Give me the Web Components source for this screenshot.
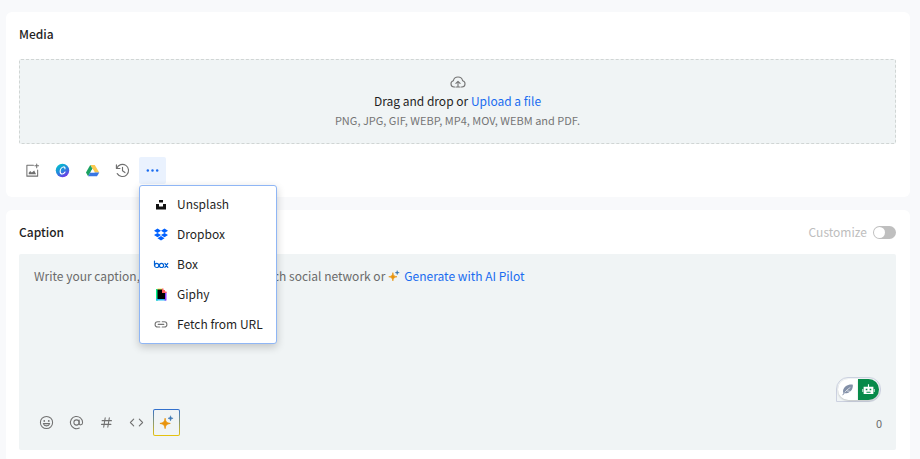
<!DOCTYPE html>
<html lang="en">
<head>
<meta charset="utf-8">
<meta name="viewport" content="width=device-width, initial-scale=1">
<title>Composer</title>
<style>
  :root {
    --composer-bg: #f8f9fb;
    --composer-field: #f0f4f5;
    --composer-link: #1a6cf0;
    --composer-text: #1f1f1f;
    --composer-muted: #757575;
  }

  body {
    margin: 0;
    padding: 12px 10px 0 6px;
    min-height: 100vh;
    box-sizing: border-box;
    background: var(--composer-bg);
    color: var(--composer-text);
    font: 12px/18px "Noto Sans CJK SC", "Noto Sans", sans-serif;
    display: flex;
    flex-direction: column;
    gap: 13px;
  }

  composer-card:last-child {
    flex: 1;
  }
</style>
</head>
<body>
<composer-card heading="Media">
  <media-dropzone></media-dropzone>
  <icon-toolbar>
    <icon-button icon="image" label="Media library"></icon-button>
    <icon-button icon="canva" label="Canva"></icon-button>
    <icon-button icon="drive" label="Google Drive"></icon-button>
    <icon-button icon="history" label="Recent files"></icon-button>
    <source-menu>
      <menu-item icon="unsplash">Unsplash</menu-item>
      <menu-item icon="dropbox">Dropbox</menu-item>
      <menu-item icon="box">Box</menu-item>
      <menu-item icon="giphy">Giphy</menu-item>
      <menu-item icon="link">Fetch from URL</menu-item>
    </source-menu>
  </icon-toolbar>
</composer-card>

<composer-card heading="Caption">
  <toggle-switch slot="action">Customize</toggle-switch>
  <caption-editor>
    <icon-button icon="smile" label="Emoji"></icon-button>
    <icon-button icon="at" label="Mention"></icon-button>
    <icon-button icon="hash" label="Hashtag"></icon-button>
    <icon-button icon="code" label="Variables"></icon-button>
    <icon-button icon="sparkle" label="AI Pilot" outlined></icon-button>
  </caption-editor>
</composer-card>

<script>
// =============================================================================
// Icons
// =============================================================================

const stroke = 'fill="none" stroke="currentColor" stroke-linecap="round" stroke-linejoin="round"';

const icons = {
  cloud: `<svg viewBox="0 0 16 16" ${stroke} stroke-width="1.1">
    <path d="M5 13H4a3.2 3.2 0 0 1-.6-6.3 4.7 4.7 0 0 1 9.2 0A3.2 3.2 0 0 1 12 13h-1M8 13V7.5M5.9 9.4 8 7.3l2.1 2.1M6.3 13h3.4"/></svg>`,
  image: `<svg viewBox="0 0 16 16" ${stroke} stroke-width="1.1">
    <path d="M9 2.500H2v11.500h11.500V7.500"/><path d="M12.500 1v4M10.500 3h4"/>
    <path d="M4 12v-1.500l1.500-2 1.800 1.700L9.800 8l2 4z" fill="currentColor" stroke="none"/></svg>`,
  canva: `<svg viewBox="0 0 16 16">
    <defs><linearGradient id="g" x1=".2" y1="0" x2=".8" y2="1">
      <stop offset="0" stop-color="#00c4cc"/><stop offset=".5" stop-color="#2586dd"/><stop offset="1" stop-color="#7d2ae8"/></linearGradient></defs>
    <circle cx="8" cy="8" r="7.200" fill="url(#g)"/>
    <path d="M10.600 6.200c.3-1.400-.5-2.100-1.500-2-2 .2-3.600 2.600-3.600 4.800 0 1.700.9 2.700 2.200 2.700 1.300 0 2.300-.9 3-2.100" fill="none" stroke="#fff" stroke-width="1.200" stroke-linecap="round"/></svg>`,
  drive: `<svg viewBox="0 0 16 16">
    <path d="M5.600 2h4.800l4.800 8h-4.700z" fill="#fbc94f"/>
    <path d="M5.600 2 8 6.100 3.300 14 1 10z" fill="#1ba261"/>
    <path d="M5.600 10H15.200l-2.400 4H3.300z" fill="#3a77e3"/>
    <path d="M8 6.100 10.300 10H5.700z" fill="#fff"/></svg>`,
  history: `<svg viewBox="0 0 16 16" ${stroke} stroke-width="1.200">
    <path d="M1.500 2v3.800h3.800M1.900 5.600A6.500 6.500 0 1 1 2.400 11.300M8 4.500v3.800l2.600 1.900"/></svg>`,
  more: `<svg viewBox="0 0 16 16" fill="currentColor">
    <circle cx="3" cy="8" r="1.300"/><circle cx="8" cy="8" r="1.300"/><circle cx="13" cy="8" r="1.300"/></svg>`,
  unsplash: `<svg viewBox="0 0 16 16" fill="#111"><path d="M6 4h4v2.600H6zM3 8h3v2.600h4V8h3v5.500H3z"/></svg>`,
  dropbox: `<svg viewBox="0 0 16 16" fill="#0061ff">
    <path d="m4.500 2.500 3.500 2.200-3.500 2.200L1 4.700zM11.500 2.500 15 4.700l-3.500 2.200L8 4.700zM4.500 6.900 8 9.100l-3.500 2.200L1 9.100zM11.500 6.900 15 9.100l-3.500 2.200L8 9.100zM8 10l3.500 2.200L8 14.400l-3.500-2.200z"/></svg>`,
  box: `<svg viewBox="0 0 16 16" fill="none" stroke="#0061d5" stroke-width="1.200" stroke-linecap="round" stroke-linejoin="round">
    <path d="M1.500 5v4.400"/><circle cx="3.700" cy="9.400" r="2.100"/><circle cx="8.500" cy="9.400" r="2.100"/><path d="m11.900 7.400 2.900 4M14.800 7.400l-2.900 4"/></svg>`,
  giphy: `<svg viewBox="0 0 16 16">
    <path d="M3 3h2v11.500H3z" fill="#00f28a"/><path d="M4.500 2.500H9V4H4.500z" fill="#f5e663"/>
    <path d="M3 12.500h10v2H3z" fill="#23b8f5"/><path d="M11.500 6h2v8.500h-2z" fill="#8c3bff"/>
    <path d="M9 2.500h1.500V4H12v1.500h1.500V7H9z" fill="#ff6060"/><path d="M4.500 3.500H9V7h3v6H4.500z" fill="#000"/></svg>`,
  link: `<svg viewBox="0 0 16 16" ${stroke} stroke-width="1.100">
    <path d="M6.800 11H4.700a2.600 2.600 0 0 1 0-5.200h2.100M9.200 5.800h2.100a2.600 2.600 0 0 1 0 5.200H9.200M5.200 8.400h5.600"/></svg>`,
  smile: `<svg viewBox="0 0 16 16" ${stroke} stroke-width="1.100">
    <circle cx="8" cy="8" r="6.500"/><path d="M4.600 9.200c.5 1.500 1.800 2.400 3.400 2.400s2.900-.9 3.400-2.400z"/>
    <circle cx="5.600" cy="6.300" r=".4" fill="currentColor"/><circle cx="10.400" cy="6.300" r=".4" fill="currentColor"/></svg>`,
  at: `<svg viewBox="0 0 16 16" ${stroke} stroke-width="1.100">
    <circle cx="8" cy="8" r="2.800"/><path d="M10.800 5.300V9c0 2.300 3.700 2 3.700-1A6.500 6.500 0 1 0 11 13.800"/></svg>`,
  hash: `<svg viewBox="0 0 16 16" ${stroke} stroke-width="1.100"><path d="M6.600 3 5 13M11 3 9.400 13M3.300 6h10M2.700 10h10"/></svg>`,
  code: `<svg viewBox="0 0 16 16" ${stroke} stroke-width="1.200"><path d="M5 4.500 1.500 8 5 11.500M11 4.500 14.500 8 11 11.500"/></svg>`,
  sparkle: `<svg viewBox="0 0 16 16">
    <path d="M6.500 3.500C7.200 7.500 8 8.300 12 9c-4 .7-4.800 1.500-5.500 5.500C5.800 10.500 5 9.700 1 9c4-.7 4.800-1.500 5.500-5.500z" fill="#e8930c" stroke="#e8930c" stroke-width=".9"/>
    <path d="M12.300.8c.3 1.900.8 2.400 2.700 2.700-1.900.3-2.400.8-2.700 2.700-.3-1.900-.8-2.400-2.700-2.700 1.900-.3 2.400-.8 2.700-2.700z" fill="#3c78b4" stroke="#3c78b4" stroke-width=".6"/></svg>`,
  feather: `<svg viewBox="0 0 16 16"><path d="M3 12.500C1.600 9.500 3 6 5.800 4 8.200 2.300 11.500 1.500 14.500 2c.3 3-.4 5.500-2.200 7.600C10 12.200 6.500 13.300 3 12.500z" fill="#8390a8"/>
    <path d="M2 15C4.500 11 7.500 8 11.500 5.500M7 9.700l4 .5" fill="none" stroke="#fff" stroke-width=".8"/>
    <path d="M2 15l2.500-3.500" stroke="#8390a8" stroke-width="1.200"/></svg>`,
  robot: `<svg viewBox="0 0 16 16" fill="#fff"><path d="M7.300 1.500h1.400V4.500H14v9H2v-9h5.300z"/><path d="M.5 7.500h1v3.500h-1zM14.500 7.500h1v3.500h-1z"/>
    <path d="M4.600 7h2v2h-2zM9.400 7h2v2h-2zM5.500 10.800h5v1.100h-5z" fill="#078a49"/></svg>`,
};

const resetStyles = `
  *, *::before, *::after { box-sizing: border-box; }
  button, input, textarea { font: inherit; color: inherit; margin: 0; }
  svg { display: block; width: 16px; height: 16px; flex: none; }
`;

// =============================================================================
// ComposerCard - white panel with a heading and an optional action
// =============================================================================

class ComposerCard extends HTMLElement {
  constructor() {
    super();
    this.attachShadow({ mode: 'open' });
  }

  connectedCallback() {
    this.shadowRoot.innerHTML = `
      <style>
        ${resetStyles}
        :host {
          display: block;
          box-sizing: border-box;
          padding: 13px 14px 13px 13px;
          background: #fff;
          border-radius: 6px;
        }
        header {
          display: flex;
          align-items: center;
          justify-content: space-between;
          height: 18px;
          margin-bottom: 16px;
        }
        :host([heading="Caption"]) header { margin-bottom: 13px; }
        h2 { margin: 0; font-size: 12px; font-weight: 500; }
      </style>
      <header>
        <h2>${this.getAttribute('heading')}</h2>
        <slot name="action"></slot>
      </header>
      <slot></slot>
    `;
  }
}

// =============================================================================
// MediaDropzone
// =============================================================================

class MediaDropzone extends HTMLElement {
  constructor() {
    super();
    this.attachShadow({ mode: 'open' });
  }

  connectedCallback() {
    this.shadowRoot.innerHTML = `
      <style>
        ${resetStyles}
        :host {
          display: flex;
          flex-direction: column;
          align-items: center;
          box-sizing: border-box;
          padding: 14px 12px;
          border: 1px dashed #d0d5d4;
          border-radius: 2px;
          background: var(--composer-field);
        }
        svg { color: var(--composer-muted); }
        p { margin: 2px 0 1px; }
        a { color: var(--composer-link); text-decoration: none; }
        small { font-size: 11px; line-height: 18px; color: var(--composer-muted); }
      </style>
      ${icons.cloud}
      <p>Drag and drop or <a href="#upload">Upload a file</a></p>
      <small>PNG, JPG, GIF, WEBP, MP4, MOV, WEBM and PDF.</small>
    `;
  }
}

// =============================================================================
// IconToolbar / IconButton
// =============================================================================

class IconToolbar extends HTMLElement {
  constructor() {
    super();
    this.attachShadow({ mode: 'open' });
  }

  connectedCallback() {
    this.shadowRoot.innerHTML = `
      <style>
        :host { display: flex; gap: 3px; margin-top: 13px; }
      </style>
      <slot></slot>
    `;
  }
}

class IconButton extends HTMLElement {
  constructor() {
    super();
    this.attachShadow({ mode: 'open' });
  }

  connectedCallback() {
    this.shadowRoot.innerHTML = `
      <style>
        ${resetStyles}
        :host { display: block; }
        button {
          display: grid;
          place-items: center;
          width: 27px;
          height: 27px;
          padding: 0;
          border: 1px solid transparent;
          border-radius: 2px;
          background: none;
          color: #707070;
          cursor: pointer;
        }
        svg { width: 15px; height: 15px; }
        :host([active]) button { background: #eaf2fe; color: var(--composer-link); }
        :host([outlined]) button {
          background:
            linear-gradient(var(--composer-field), var(--composer-field)) padding-box,
            linear-gradient(#2f6fd0, #e8c30c) border-box;
        }
      </style>
      <button type="button" aria-label="${this.getAttribute('label')}">${icons[this.getAttribute('icon')]}</button>
    `;
  }
}

// =============================================================================
// SourceMenu / MenuItem - "more" button with its dropdown
// =============================================================================

class SourceMenu extends HTMLElement {
  constructor() {
    super();
    this.attachShadow({ mode: 'open' });
  }

  connectedCallback() {
    this.shadowRoot.innerHTML = `
      <style>
        ${resetStyles}
        :host { display: block; position: relative; }
        .menu {
          position: absolute;
          top: 28px;
          left: 0;
          z-index: 10;
          padding: 3px 0 4px;
          border: 1px solid #8fb6f5;
          border-radius: 3px;
          background: #fff;
          box-shadow: 0 3px 8px rgba(0, 0, 0, 0.2);
        }
        .menu[hidden] { display: none; }
      </style>
      <icon-button icon="more" label="More sources" active></icon-button>
      <div class="menu" role="menu"><slot></slot></div>
    `;

    const menu = this.shadowRoot.querySelector('.menu');
    this.shadowRoot.querySelector('icon-button').addEventListener('click', () => {
      menu.hidden = !menu.hidden;
    });
  }
}

class MenuItem extends HTMLElement {
  constructor() {
    super();
    this.attachShadow({ mode: 'open' });
  }

  connectedCallback() {
    this.shadowRoot.innerHTML = `
      <style>
        ${resetStyles}
        :host { display: block; }
        button {
          display: flex;
          align-items: center;
          gap: 8px;
          width: 100%;
          height: 30px;
          padding: 0 13px;
          border: 0;
          background: none;
          white-space: nowrap;
          cursor: pointer;
        }
        button:hover { background: var(--composer-field); }
        svg { color: var(--composer-muted); }
      </style>
      <button type="button" role="menuitem">${icons[this.getAttribute('icon')]}<slot></slot></button>
    `;
  }
}

// =============================================================================
// ToggleSwitch
// =============================================================================

class ToggleSwitch extends HTMLElement {
  constructor() {
    super();
    this.attachShadow({ mode: 'open' });
  }

  connectedCallback() {
    this.shadowRoot.innerHTML = `
      <style>
        ${resetStyles}
        :host { display: block; color: #bdbdbd; }
        label { display: flex; align-items: center; gap: 6px; }
        input {
          appearance: none;
          display: flex;
          width: 23px;
          height: 13px;
          padding: 1px;
          border-radius: 7px;
          background: #bfbfbf;
        }
        input::before {
          content: "";
          width: 11px;
          height: 11px;
          border-radius: 50%;
          background: #fff;
        }
        input:checked { justify-content: flex-end; background: var(--composer-link); }
      </style>
      <label><slot></slot><input type="checkbox" role="switch"></label>
    `;
  }
}

// =============================================================================
// CaptionEditor
// =============================================================================

class CaptionEditor extends HTMLElement {
  constructor() {
    super();
    this.attachShadow({ mode: 'open' });
  }

  connectedCallback() {
    this.shadowRoot.innerHTML = `
      <style>
        ${resetStyles}
        :host {
          display: flex;
          flex-direction: column;
          position: relative;
          box-sizing: border-box;
          padding: 13px 14px 14px;
          border-radius: 2px;
          background: var(--composer-field);
        }
        .prompt { display: flex; align-items: center; gap: 3px; padding-left: 1px; color: #6b6b6b; }
        .prompt svg { width: 12px; height: 12px; }
        a { display: flex; align-items: center; gap: 4px; color: var(--composer-link); text-decoration: none; }
        textarea {
          height: 124px;
          padding: 0;
          border: 0;
          outline: 0;
          resize: none;
          background: none;
        }
        footer { display: flex; align-items: center; gap: 3px; }
        output { margin-left: auto; font-size: 11px; color: #6b6b6b; }
        .assist {
          position: absolute;
          right: 15px;
          bottom: 48px;
          display: flex;
          width: 45px;
          height: 25px;
          padding: 1px;
          border: 1px solid #ccd1e0;
          border-radius: 12px 12px 12px 0;
          background: var(--composer-field);
        }
        .assist button {
          display: grid;
          place-items: center;
          width: 20px;
          height: 21px;
          padding: 0;
          border: 0;
          border-radius: 11px 0 0 11px;
          background: #fff;
          box-shadow: 0 1px 2px rgba(0, 0, 0, 0.2);
        }
        .assist button + button { width: 22px; border-radius: 0 11px 11px 0; background: #078a49; }
        .assist svg { width: 13px; height: 13px; }
      </style>
      <div class="prompt">
        <label for="caption">Write your caption, then customize it for each social network or</label>
        <a href="#ai-pilot">${icons.sparkle}Generate with AI Pilot</a>
      </div>
      <textarea id="caption"></textarea>
      <footer>
        <slot></slot>
        <output for="caption">0</output>
      </footer>
      <div class="assist">
        <button type="button" aria-label="Rewrite">${icons.feather}</button>
        <button type="button" aria-label="Assistant">${icons.robot}</button>
      </div>
    `;

    const textarea = this.shadowRoot.querySelector('textarea');
    textarea.addEventListener('input', () => {
      this.shadowRoot.querySelector('output').value = textarea.value.length;
    });
  }
}

// =============================================================================
// Register Custom Elements
// =============================================================================

customElements.define('composer-card', ComposerCard);
customElements.define('media-dropzone', MediaDropzone);
customElements.define('icon-toolbar', IconToolbar);
customElements.define('icon-button', IconButton);
customElements.define('source-menu', SourceMenu);
customElements.define('menu-item', MenuItem);
customElements.define('toggle-switch', ToggleSwitch);
customElements.define('caption-editor', CaptionEditor);
</script>
</body>
</html>
